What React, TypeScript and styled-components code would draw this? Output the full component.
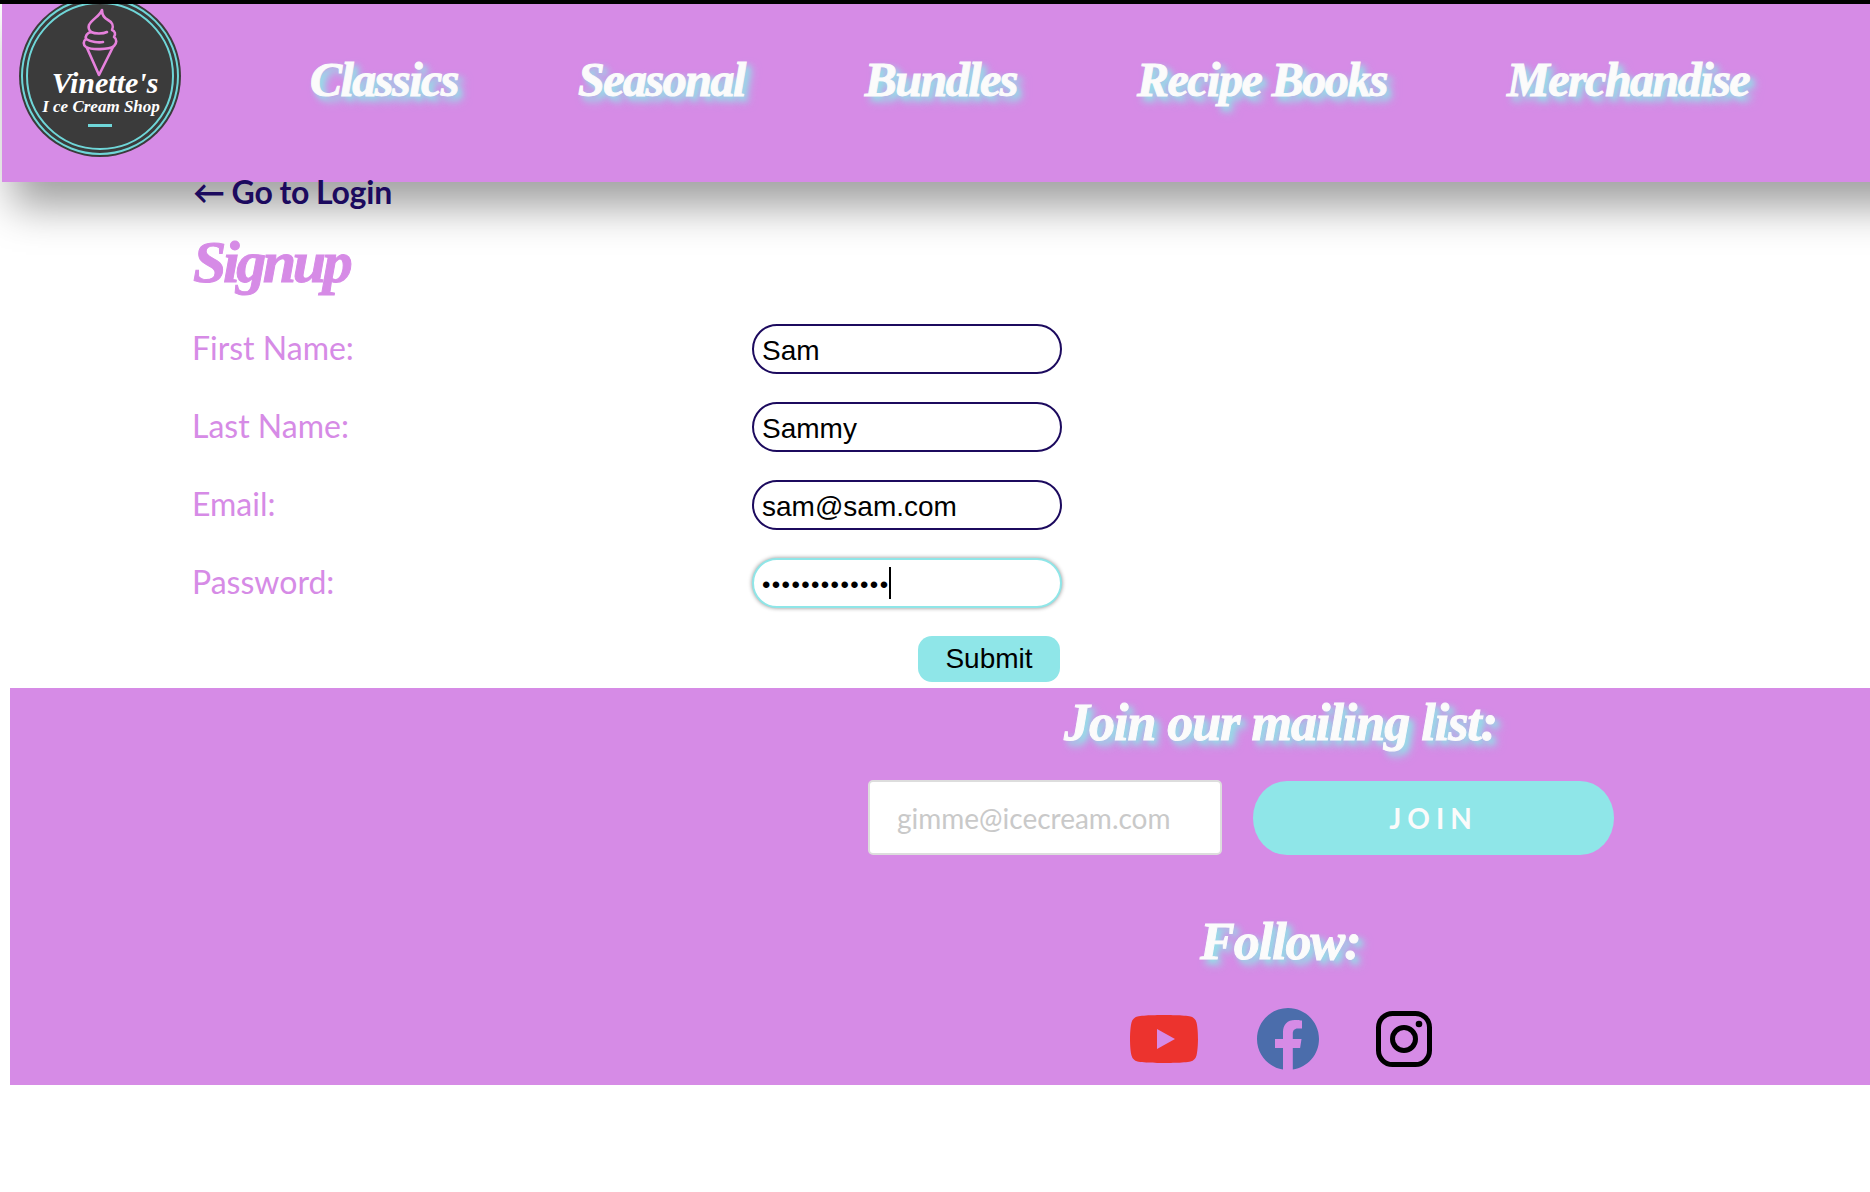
import React from "react";
import styled, { createGlobalStyle } from "styled-components";

const scriptFont = `"Liberation Serif", "Noto Sans", serif`;
const pink = "#d68be6";
const aqua = "#8fe6e8";
const navy = "#1c0a5e";
const glow = "4px 4px 6px #8fe6e8, 6px 6px 10px rgba(143, 230, 232, 0.6)";

const Global = createGlobalStyle`
  html, body { margin: 0; padding: 0; background: #fff; }
  body { font-family: Lato, "Liberation Sans", sans-serif; }
`;

const Page = styled.div`
  width: 1870px;
  height: 1192px;
  overflow: hidden;
  display: flex;
  flex-direction: column;
`;

const TopRule = styled.div`
  height: 4px;
  flex: none;
  background-color: #000;
  position: relative;
  z-index: 3;
  background-image: repeating-linear-gradient(90deg, #000 0 60px, #555 60px 61px, #000 61px 60px);
  background-size: 60px 1px;
  background-position: 1px 0;
  background-repeat: repeat-x;
`;

const Header = styled.header`
  height: 178px;
  flex: none;
  margin-left: 2px;
  margin-right: -80px;
  background: ${pink};
  box-shadow: 10px 24px 40px rgba(0, 0, 0, 0.38);
  display: flex;
  align-items: flex-start;
  position: relative;
`;

const LogoBox = styled.div`
  width: 162px;
  height: 162px;
  margin: -9px 0 0 17px;
  flex: none;
`;

const Nav = styled.nav`
  display: flex;
  gap: 120px;
  margin-left: 129px;
  padding-top: 42px;
`;

const NavLink = styled.a`
  font-family: ${scriptFont};
  font-style: italic;
  font-weight: 700;
  font-size: 48px;
  letter-spacing: -1.5px;
  line-height: 68px;
  color: #fbfbfb;
  white-space: nowrap;
  -webkit-text-stroke: 1px #fbfbfb;
  text-shadow: ${glow};
`;

const Main = styled.main`
  height: 506px;
  flex: none;
  padding-left: 193px;
  display: flex;
  flex-direction: column;
  position: relative;
`;

const BackLink = styled.a`
  font-size: 32px;
  font-weight: 700;
  line-height: 38px;
  margin-top: -9px;
  color: ${navy};
  position: relative;
  z-index: 2;
  letter-spacing: -0.2px;
  word-spacing: -0.8px;
`;

const Title = styled.h1`
  margin: 6px 0 0;
  font-family: ${scriptFont};
  font-style: italic;
  font-weight: 700;
  font-size: 60px;
  letter-spacing: -3.4px;
  line-height: 90px;
  color: ${pink};
  -webkit-text-stroke: 1px ${pink};
`;

const Form = styled.form`
  margin-top: 17px;
  width: 869px;
  display: flex;
  flex-direction: column;
  gap: 28px;
`;

const Row = styled.div`
  height: 50px;
  display: flex;
  align-items: center;
  justify-content: space-between;
`;

const Label = styled.label`
  font-size: 32px;
  color: ${pink};
  margin: 0 0 4px -1px;
`;

const FieldWrap = styled.div`
  position: relative;
  width: 310px;
  height: 50px;
`;

const Field = styled.input<{ $focused?: boolean }>`
  box-sizing: border-box;
  width: 310px;
  height: 50px;
  padding: 4px 8px 0;
  border: 2px solid ${(p) => (p.$focused ? aqua : navy)};
  border-radius: 25px;
  background: #fff;
  font-family: "Liberation Sans", Arial, sans-serif;
  font-size: ${(p) => (p.$focused ? 24 : 28)}px;
  letter-spacing: ${(p) => (p.$focused ? 1.4 : 0)}px;
  color: #000;
  outline: none;
  box-shadow: ${(p) => (p.$focused ? "0 0 4px rgba(0,0,0,0.45)" : "none")};
`;

const Caret = styled.span`
  position: absolute;
  left: 137px;
  top: 9px;
  width: 2px;
  height: 32px;
  background: #000;
`;

const SubmitRow = styled.div`
  margin-top: 0;
  display: flex;
  justify-content: flex-end;
  padding-right: 2px;
`;

const Submit = styled.button`
  width: 142px;
  height: 46px;
  border: none;
  border-radius: 14px;
  background: ${aqua};
  font-family: "Liberation Sans", Arial, sans-serif;
  font-size: 28px;
  color: #000;
  padding: 0;
`;

const Footer = styled.footer`
  height: 397px;
  flex: none;
  margin-left: 10px;
  background: ${pink};
  display: flex;
  flex-direction: column;
  align-items: flex-start;
  padding-left: 858px;
`;

const FooterHeading = styled.h2<{ $left: number; $top: number }>`
  margin: ${(p) => p.$top}px 0 0 ${(p) => p.$left}px;
  font-family: ${scriptFont};
  font-style: italic;
  font-weight: 700;
  font-size: 52px;
  letter-spacing: -1px;
  line-height: 70px;
  color: #fbfbfb;
  white-space: nowrap;
  -webkit-text-stroke: 1px #fbfbfb;
  text-shadow: ${glow};
`;

const JoinRow = styled.div`
  margin-top: 22px;
  display: flex;
  gap: 31px;
  align-items: flex-end;
`;

const EmailInput = styled.input`
  box-sizing: border-box;
  width: 354px;
  height: 75px;
  padding: 0 27px;
  border: 2px solid #ddd;
  border-radius: 5px;
  background: #fff;
  font-family: Lato, sans-serif;
  font-size: 28px;
  outline: none;
  &::placeholder { color: #c9c9c9; opacity: 1; }
`;

const JoinButton = styled.button`
  width: 361px;
  height: 74px;
  border: none;
  border-radius: 34px / 37px;
  background: ${aqua};
  color: #fbfbfb;
  font-family: Lato, sans-serif;
  font-weight: 700;
  font-size: 28px;
  letter-spacing: 6px;
  padding: 0;
`;

const Icons = styled.div`
  margin: 31px 0 0 262px;
  display: flex;
  align-items: center;
`;

const IconSlot = styled.a<{ $w: number; $ml: number }>`
  display: block;
  width: ${(p) => p.$w}px;
  margin-left: ${(p) => p.$ml}px;
  line-height: 0;
`;

const Logo = () => (
  <svg viewBox="0 0 162 162" width="162" height="162">
    <circle cx="81" cy="81" r="81" fill="#3b3b3b" />
    <circle cx="81" cy="81" r="78" fill="none" stroke="#6fd6d8" strokeWidth="2" />
    <circle cx="81" cy="81" r="73" fill="none" stroke="#6fd6d8" strokeWidth="2" />
    <g fill="none" stroke="#e681dc" strokeWidth="2.6" strokeLinejoin="round" strokeLinecap="round">
      <path d="M83 15C81 21 73 24 70 30C69 33 70 35 72 37C68 38 66 41 67 44C64 46 64 50 67 52C72 55 90 55 95 51C98 48 98 44 95 42C97 39 96 36 93 35C95 31 93 27 89 25C85 23 83 20 83 15z" />
      <path d="M72 37C76 39 84 39 88 37M67 44C72 47 80 48 84 47" />
      <path d="M68 53L80 80L94 52" />
    </g>
    <text x="86" y="98" textAnchor="middle" fontFamily="Liberation Serif" fontStyle="italic" fontWeight="700" fontSize="30" fill="#fff">Vinette's</text>
    <text x="82" y="117" textAnchor="middle" fontFamily="Liberation Serif" fontStyle="italic" fontWeight="700" fontSize="17" fill="#fff">I ce Cream Shop</text>
    <rect x="69" y="129" width="24" height="3" fill="#6fd6d8" />
  </svg>
);

const YouTube = () => (
  <svg viewBox="0 0 68 48" width="68" height="48">
    <path fill="#ec332e" d="M66.5 7.5a8.5 8.5 0 0 0-6-6C55 0 34 0 34 0S13 0 7.500 1.500a8.500 8.500 0 0 0-6 6C0 13 0 24 0 24s0 11 1.500 16.500a8.500 8.500 0 0 0 6 6C13 48 34 48 34 48s21 0 26.500-1.500a8.500 8.500 0 0 0 6-6C68 35 68 24 68 24s0-11-1.500-16.500z" />
    <path fill={pink} d="M27 14v20l18-10z" />
  </svg>
);

const Facebook = () => (
  <svg viewBox="0 0 62 62" width="62" height="62">
    <path fill="#4b6dab" d="M62 31C62 13.900 48.100 0 31 0S0 13.900 0 31c0 15.500 11.300 28.300 26 30.600V40h-8v-9h8v-6.800C26 16.400 30.600 12 37.800 12c3.400 0 7.200.6 7.200.6V20.400h-4c-4 0-5.200 2.500-5.200 5V31h8.700l-1.400 9H35.800v21.600C50.700 59.300 62 46.500 62 31z" />
  </svg>
);

const Instagram = () => (
  <svg viewBox="0 0 56 56" width="56" height="56" fill="none" stroke="#000">
    <rect x="2.500" y="2.500" width="51" height="51" rx="14" strokeWidth="5" />
    <circle cx="28" cy="28" r="11.500" strokeWidth="5" />
    <circle cx="43" cy="13" r="3.300" fill="#000" stroke="none" />
  </svg>
);

const navItems = ["Classics", "Seasonal", "Bundles", "Recipe Books", "Merchandise"];
const fields = [
  { label: "First Name:", value: "Sam", type: "text" },
  { label: "Last Name:", value: "Sammy", type: "text" },
  { label: "Email:", value: "sam@sam.com", type: "text" },
  { label: "Password:", value: "samsamsamsam1", type: "password", focused: true },
];

export default function App() {
  return (
    <Page>
      <Global />
      <TopRule />
      <Header>
        <LogoBox><Logo /></LogoBox>
        <Nav>
          {navItems.map((n) => <NavLink key={n}>{n}</NavLink>)}
        </Nav>
      </Header>
      <Main>
        <BackLink>← Go to Login</BackLink>
        <Title>Signup</Title>
        <Form>
          {fields.map((f) => (
            <Row key={f.label}>
              <Label>{f.label}</Label>
              <FieldWrap>
                <Field type={f.type} defaultValue={f.value} $focused={f.focused} readOnly />
                {f.focused && <Caret />}
              </FieldWrap>
            </Row>
          ))}
          <SubmitRow><Submit type="button">Submit</Submit></SubmitRow>
        </Form>
      </Main>
      <Footer>
        <FooterHeading $left={196} $top={0}>Join our mailing list:</FooterHeading>
        <JoinRow>
          <EmailInput placeholder="gimme@icecream.com" readOnly />
          <JoinButton type="button">JOIN</JoinButton>
        </JoinRow>
        <FooterHeading $left={332} $top={52}>Follow:</FooterHeading>
        <Icons>
          <IconSlot $w={68} $ml={0}><YouTube /></IconSlot>
          <IconSlot $w={62} $ml={59}><Facebook /></IconSlot>
          <IconSlot $w={56} $ml={57}><Instagram /></IconSlot>
        </Icons>
      </Footer>
    </Page>
  );
}
